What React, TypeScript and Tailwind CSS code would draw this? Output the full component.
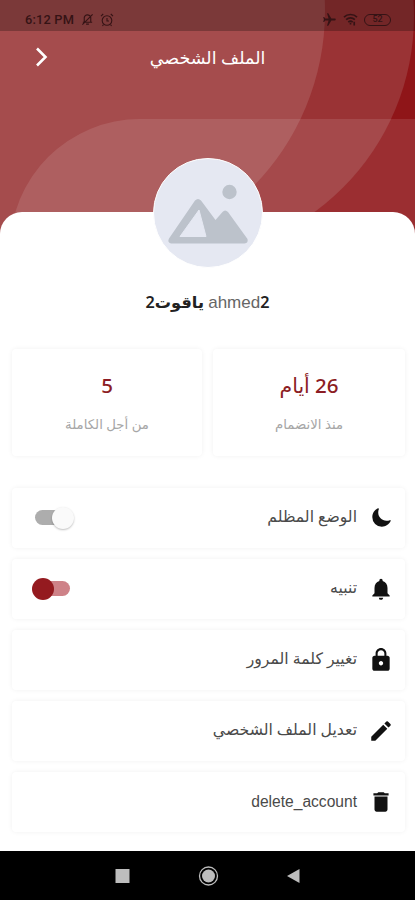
import { useState, type ReactNode } from "react";
import clsx from "clsx";
import { IoMoon } from "react-icons/io5";
import {
  MdAirplanemodeActive,
  MdDelete,
  MdEdit,
  MdLock,
  MdNotifications,
} from "react-icons/md";

/* ------------------------------ Status bar ------------------------------ */

function StatusBar() {
  return (
    <div
      dir="ltr"
      className="flex h-[31px] items-center justify-between bg-black/25 pt-2 pr-6 pl-[25px] text-[#351315]"
    >
      <div className="flex items-center gap-[6px]">
        <span className="w-[50px] font-[Roboto] text-[12.8px] leading-4 font-medium tracking-[0.2px] whitespace-nowrap">
          6:12 PM
        </span>
        <svg viewBox="0 0 14 14" className="size-[13px]" fill="none" stroke="currentColor" strokeWidth="1.2">
          <path d="M3.5 10V6a3.5 3.5 0 0 1 7-1v5zM2 10h10M5.5 12h3M1.5 12.5l11-11" />
        </svg>
        <svg viewBox="0 0 14 14" className="size-[14px]" fill="none" stroke="currentColor" strokeWidth="1.1">
          <circle cx="7" cy="7.5" r="4.8" />
          <path d="M1 3.2 3.2 1M13 3.2 10.8 1M7 5v3h2M3.5 11.5l-1 1.5M10.5 11.5l1 1.5" />
        </svg>
      </div>
      <div className="flex items-center gap-[6px]">
        <MdAirplanemodeActive className="size-[15px] rotate-90" />
        <svg viewBox="0 0 16 14" className="h-[13px] w-[15px]" fill="none" stroke="currentColor" strokeWidth="1.8">
          <path d="M1 4.5a10 10 0 0 1 14 0M3.3 7.2a6.8 6.8 0 0 1 9.4 0M5.6 9.8a3.6 3.6 0 0 1 4.8 0" />
          <path d="M8 10.5v2M12 9.5v4" />
        </svg>
        <span className="flex h-[12px] w-[27px] items-center justify-center rounded-full border border-current font-[Roboto] text-[9px] leading-none font-medium">
          52
        </span>
      </div>
    </div>
  );
}

/* ------------------------------ Header ------------------------------ */

function HeaderBackdrop() {
  return (
    <svg viewBox="0 0 415 240" className="absolute inset-x-0 top-0 -z-10 h-[240px] w-full">
      <rect width="415" height="240" fill="#8f1518" />
      <circle cx="171" cy="16" r="243" fill="#9a3335" />
      <circle cx="75" cy="11" r="250" fill="#a54c4d" />
      <path d="M415 119H140A130 130 0 0 0 10 249H415Z" fill="#fff" fillOpacity=".11" />
    </svg>
  );
}

function Header() {
  return (
    <header className="relative isolate h-[212px]">
      <HeaderBackdrop />
      <StatusBar />
      <div className="relative flex h-[54px] items-center justify-center">
        <h1 className="-mt-[2px] text-[17.5px] leading-6 text-white">الملف الشخصي</h1>
        <button aria-label="رجوع" className="absolute top-[16px] left-[34px]">
          <svg viewBox="0 0 14 20" className="h-5 w-[14px]" fill="none" stroke="#fff" strokeWidth="2.6">
            <path d="M3 1.5 11.5 10 3 18.5" />
          </svg>
        </button>
      </div>
    </header>
  );
}

/* ------------------------------ Avatar ------------------------------ */

function Avatar() {
  return (
    <div className="-mt-[54px] size-[110px] overflow-hidden rounded-full border border-white bg-[#e5e8f2]">
      <svg viewBox="0 0 108 108" className="size-full">
        <circle cx="75.5" cy="33" r="7.2" fill="#bcc2cb" />
        <path
          d="M41 41.5q3-3 6 0L61.500 61l7-8q2.500-3 5.500 0L93.500 80q1 4-3 4.500H17q-4-1-2-5Z"
          fill="#bcc2cb"
        />
        <path d="M45 51 52 77.500H26Z" fill="#e5e8f2" stroke="#e5e8f2" strokeWidth="1" strokeLinejoin="round" />
      </svg>
    </div>
  );
}

/* ------------------------------ Cards ------------------------------ */

function StatCard({ value, label }: { value: string; label: string }) {
  return (
    <div className="flex h-[107px] flex-col items-center rounded-[4px] bg-white pt-[22px] shadow-[0_0_5px_rgba(0,0,0,0.06)]">
      <p className="text-[20.5px] leading-7 font-medium text-[#8c1d24]">{value}</p>
      <p className="mt-[15px] text-[13.3px] leading-5 text-[#a6a6a6]">{label}</p>
    </div>
  );
}

function Toggle({ on, onChange }: { on: boolean; onChange: () => void }) {
  return (
    <button
      role="switch"
      aria-checked={on}
      onClick={onChange}
      className="flex h-6 w-[42px] items-center"
    >
      <span
        className={clsx(
          "flex h-[15px] w-[36px] items-center rounded-full",
          on ? "mr-[2px] justify-end bg-[#ce8288]" : "mr-px justify-start bg-[#adadad]",
        )}
      >
        <span
          className={clsx(
            "size-[22px] shrink-0 rounded-full",
            on ? "-ml-[2px] bg-[#941a1f]" : "-mr-[3px] bg-[#fafafa] shadow-[0_1px_2px_rgba(0,0,0,0.25)]",
          )}
        />
      </span>
    </button>
  );
}

function SettingRow({
  icon,
  label,
  className,
  children,
}: {
  icon: ReactNode;
  label: string;
  className?: string;
  children?: ReactNode;
}) {
  return (
    <li className="flex h-[59.5px] items-center rounded-[4px] bg-white pr-[13px] pl-[18px] shadow-[0_0_5px_rgba(0,0,0,0.06)]">
      <span className="flex size-[22px] items-center justify-center text-[#111]">{icon}</span>
      <span className={clsx("mr-[13px] text-[#4a4a4a]", className ?? "-mt-[2px] text-[15.7px]")}>{label}</span>
      <span className="mr-auto">{children}</span>
    </li>
  );
}

/* ------------------------------ Navigation bar ------------------------------ */

function NavigationBar() {
  return (
    <nav dir="ltr" className="flex h-[49px] items-center justify-center bg-black">
      <svg viewBox="0 0 200 24" className="h-6 w-[200px]" fill="#bdbdbd">
        <rect x="7.500" y="5" width="14" height="14" />
        <circle cx="100.500" cy="12" r="6.500" />
        <circle cx="100.500" cy="12" r="9" fill="none" stroke="#bdbdbd" strokeWidth="1.300" />
        <path d="M191.500 5v14l-12.500-7Z" />
      </svg>
    </nav>
  );
}

export default function App() {
  const [dark, setDark] = useState(false);
  const [alerts, setAlerts] = useState(true);

  return (
    <div
      dir="rtl"
      className="flex h-[900px] w-[415px] flex-col overflow-hidden bg-white font-['Noto_Sans','DejaVu_Sans',sans-serif]"
    >
      <Header />
      <main className="relative flex flex-1 flex-col rounded-t-[22px] bg-white">
        <div className="flex flex-col items-center">
          <Avatar />
          <h2 className="mt-[22px] text-[16.2px] leading-6 font-semibold text-[#222]">
            <span className="font-['Liberation_Sans'] text-[17px] font-normal text-[#666]">ahmed</span>2{" "}
            ياقوت2
          </h2>
        </div>
        <section className="mt-[34px] grid grid-cols-[192px_190px] gap-[11px] pr-[10px]">
          <StatCard value="26 أيام" label="منذ الانضمام" />
          <StatCard value="5" label="من أجل الكاملة" />
        </section>
        <ul className="mt-[32px] mr-[10px] ml-3 flex flex-col gap-[11.6px]">
          <SettingRow icon={<IoMoon className="size-[21px] shrink-0" />} label="الوضع المظلم">
            <Toggle on={dark} onChange={() => setDark(!dark)} />
          </SettingRow>
          <SettingRow icon={<MdNotifications className="size-[26px] shrink-0" />} label="تنبيه">
            <Toggle on={alerts} onChange={() => setAlerts(!alerts)} />
          </SettingRow>
          <SettingRow icon={<MdLock className="size-[26px] shrink-0" />} label="تغيير كلمة المرور" />
          <SettingRow icon={<MdEdit className="size-[26px] shrink-0" />} label="تعديل الملف الشخصي" />
          <SettingRow
            icon={<MdDelete className="size-[26px] shrink-0" />}
            label="delete_account"
            className="font-['Liberation_Sans'] text-[15.600px]"
          />
        </ul>
      </main>
      <NavigationBar />
    </div>
  );
}
